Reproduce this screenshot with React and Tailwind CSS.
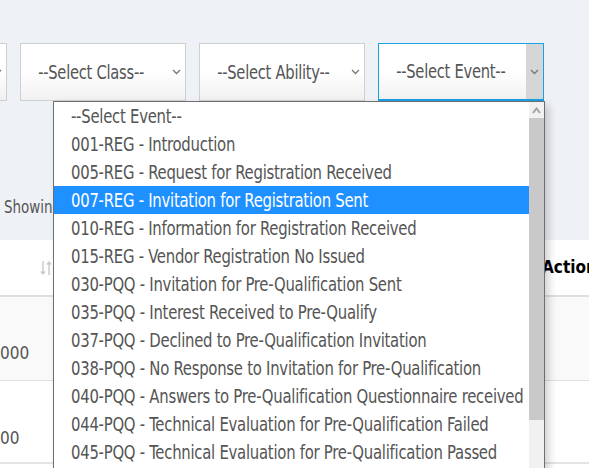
import React from "react";

const items = [
  "--Select Event--",
  "001-REG - Introduction",
  "005-REG - Request for Registration Received",
  "007-REG - Invitation for Registration Sent",
  "010-REG - Information for Registration Received",
  "015-REG - Vendor Registration No Issued",
  "030-PQQ - Invitation for Pre-Qualification Sent",
  "035-PQQ - Interest Received to Pre-Qualify",
  "037-PQQ - Declined to Pre-Qualification Invitation",
  "038-PQQ - No Response to Invitation for Pre-Qualification",
  "040-PQQ - Answers to Pre-Qualification Questionnaire received",
  "044-PQQ - Technical Evaluation for Pre-Qualification Failed",
  "045-PQQ - Technical Evaluation for Pre-Qualification Passed",
];

function Chevron() {
  return (
    <svg width="9" height="6" viewBox="0 0 9 6" className="shrink-0">
      <path d="M1 1 L4.5 4.5 L8 1" fill="none" stroke="#777" strokeWidth="1.3" />
    </svg>
  );
}

function SelectBox({ label, active }) {
  return (
    <div
      className={
        "relative flex h-[58px] w-[166px] shrink-0 items-center bg-gradient-to-b from-white via-white to-[#f1f1f1] " +
        (active ? "border border-b-2 border-[#1aa0e6]" : "border border-[#cfcfcf]")
      }
    >
      <span className="inline-block origin-left scale-x-[0.86] whitespace-nowrap pl-[20px] text-[19px] leading-none text-[#555] tracking-[-0.3px]">
        {label}
      </span>
      {active ? (
        <div className="absolute right-0 top-0 bottom-0 flex w-[17px] items-center justify-center bg-[#d6d6d6]">
          <Chevron />
        </div>
      ) : (
        <div className="absolute right-[4px] top-0 bottom-0 flex items-center">
          <Chevron />
        </div>
      )}
    </div>
  );
}

export default function App() {
  return (
    <div
      className="relative h-[468px] w-[589px] overflow-hidden bg-white"
      style={{ fontFamily: '"Liberation Sans Narrow", "DejaVu Sans Condensed", "Liberation Sans", sans-serif' }}
    >
      {/* top filter area */}
      <div className="h-[240px] bg-[#eef1f5]">
        <div className="flex gap-[13px] pt-[43px] ml-[-159px]">
          <SelectBox label="--Select Type--" />
          <SelectBox label="--Select Class--" />
          <SelectBox label="--Select Ability--" />
          <SelectBox label="--Select Event--" active />
        </div>
        <div className="mt-[98px] pl-[4px] text-[17px] leading-none text-[#555]">
          <span className="inline-block origin-left scale-x-[0.88] whitespace-nowrap">Showing 1 to 10 of 120 entries</span>
        </div>
      </div>

      {/* table */}
      <div className="flex h-[57px] items-center border-b-2 border-[#dedede] bg-white">
        <div className="flex w-[53px] justify-end pr-[1px]">
          <svg width="12" height="16" viewBox="0 0 12 16">
            <path d="M3 1 V14 M1 11.5 L3 14 L5 11.5" fill="none" stroke="#c9c9c9" strokeWidth="1.4" />
            <path d="M9 15 V2 M7 4.5 L9 2 L11 4.5" fill="none" stroke="#c9c9c9" strokeWidth="1.4" />
          </svg>
        </div>
        <div className="ml-auto w-[47px] text-[17px] font-bold text-black">Actions</div>
      </div>
      <div className="flex h-[84px] items-center border-b border-[#dedede] bg-[#f9f9f9]">
        <span className="pt-[31px] text-[17px] text-[#555]">000</span>
      </div>
      <div className="flex h-[83px] items-center border-b-2 border-[#e3e3e3] bg-white">
        <span className="pt-[34px] text-[17px] text-[#555]">00</span>
      </div>

      {/* dropdown */}
      <div className="absolute left-[53px] top-[101px] w-[492px] h-[420px] border border-[#6f6f6f] bg-white shadow-[4px_4px_8px_rgba(0,0,0,0.18)]">
        <div className="mr-[15px] overflow-hidden">
          {items.map((t, i) => (
            <div
              key={i}
              className={
                "flex h-[28px] items-center whitespace-nowrap pl-[17px] text-[19px] leading-none " +
                (i === 3 ? "bg-[#1e90ff] text-white" : "text-[#555]")
              }
            >
              <span className="inline-block origin-left scale-x-[0.87] tracking-[-0.3px]">{t}</span>
            </div>
          ))}
        </div>
        <div className="absolute right-0 top-0 bottom-0 flex w-[15px] flex-col bg-[#f1f1f1]">
          <div className="flex h-[16px] items-center justify-center">
            <svg width="9" height="7" viewBox="0 0 9 7">
              <path d="M1 6 L4.5 1.5 L8 6" fill="none" stroke="#a3a3a3" strokeWidth="2" />
            </svg>
          </div>
          <div className="h-[302px] bg-[#c9c9c9]" />
        </div>
      </div>
    </div>
  );
}
